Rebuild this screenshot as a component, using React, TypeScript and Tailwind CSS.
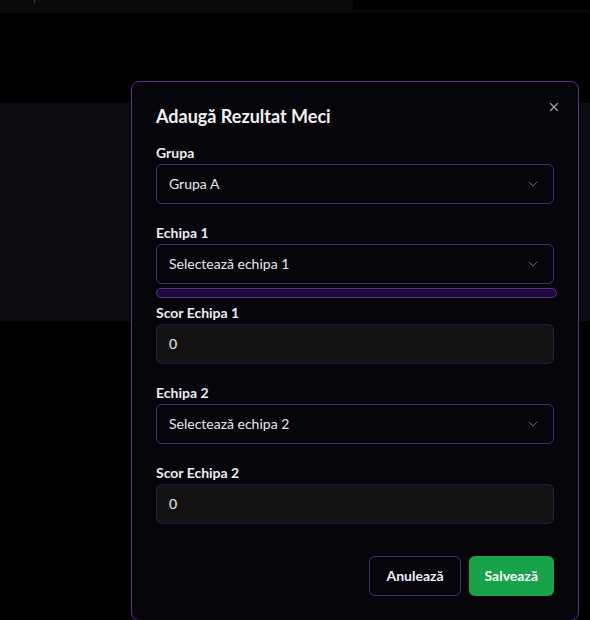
import React from 'react';
import { X, ChevronDown } from 'lucide-react';

const font = { fontFamily: 'Lato, "Noto Sans", sans-serif' };

function Label({ children }: { children: React.ReactNode }) {
  return <label className="block text-sm font-bold leading-5 text-[#ececf1] mb-px">{children}</label>;
}

function SelectBox({ value }: { value: string }) {
  return (
    <div className="flex items-center justify-between h-10 px-3 rounded-md border border-[#4b2a7b] bg-[#06050a] text-sm text-[#e8e8ee]">
      <span>{value}</span>
      <ChevronDown size={16} className="text-[#6b6b78]" strokeWidth={1.5} />
    </div>
  );
}

function ScoreInput({ value }: { value: string }) {
  return (
    <div className="flex items-center h-10 px-3 rounded-md border border-[#2a1a40] bg-[#131313] text-sm text-[#f0f0f0]">
      {value}
    </div>
  );
}

export default function App() {
  return (
    <div className="relative w-[590px] h-[620px] overflow-hidden bg-black" style={font}>
      {/* fundal */}
      <div className="flex h-[13px]">
        <div className="w-[353px] bg-[#0a0a0d] relative">
          <div className="absolute left-[34px] top-0 w-px h-[3px] bg-[#3a3a44]" />
        </div>
        <div className="flex-1 flex flex-col">
          <div className="h-[10px]" />
          <div className="flex-1 bg-[#08080b]" />
        </div>
      </div>
      <div className="mt-[90px] h-[218px] bg-[#0b0c10]" />

      {/* dialog */}
      <div className="absolute left-[131px] top-[81px] w-[448px] h-[540px] rounded-lg border border-[#5c2f90] bg-[#06050a] px-6 pt-5">
        <button className="absolute right-[17px] top-[18px] text-[#a5a5b0]">
          <X size={14} strokeWidth={2} />
        </button>
        <h2 className="text-lg font-bold leading-7 text-[#f0f0f5] mb-[13px]">Adaugă Rezultat Meci</h2>

        <div className="flex flex-col">
          <Label>Grupa</Label>
          <SelectBox value="Grupa A" />

          <div className="mt-[19px]">
            <Label>Echipa 1</Label>
            <SelectBox value="Selectează echipa 1" />
          </div>
          <div className="mt-[4px] -mr-[3px] h-[10px] rounded-full border border-[#5b2d96] bg-[#1f0c3b]" />

          <div className="mt-[5px]">
            <Label>Scor Echipa 1</Label>
            <ScoreInput value="0" />
          </div>

          <div className="mt-[19px]">
            <Label>Echipa 2</Label>
            <SelectBox value="Selectează echipa 2" />
          </div>

          <div className="mt-[19px]">
            <Label>Scor Echipa 2</Label>
            <ScoreInput value="0" />
          </div>

          <div className="flex justify-end gap-2 mt-[32px]">
            <button className="h-10 px-4 rounded-md border border-[#4b2a7b] bg-[#06050a] text-sm font-bold text-[#eef0ff]">
              Anulează
            </button>
            <button className="h-10 px-4 rounded-md bg-[#16a34a] text-sm font-bold text-white">
              Salvează
            </button>
          </div>
        </div>
      </div>
    </div>
  );
}
